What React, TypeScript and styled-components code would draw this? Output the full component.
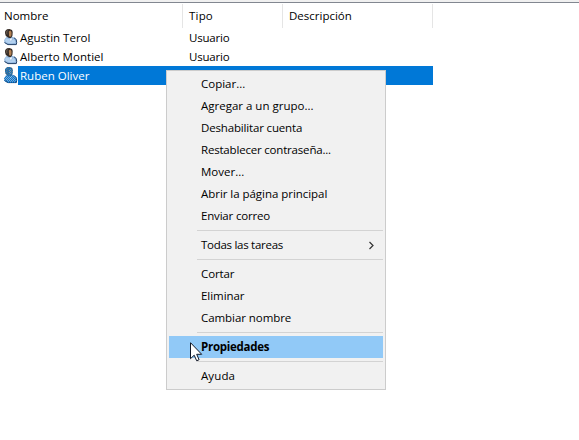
import React from 'react';
import styled, { createGlobalStyle } from 'styled-components';

const GlobalStyle = createGlobalStyle`
  body {
    margin: 0;
    background: #fff;
    overflow: hidden;
  }
`;

const Page = styled.main`
  position: relative;
  box-sizing: border-box;
  width: 579px;
  height: 440px;
  overflow: hidden;
  background: #fff;
  border-top: 2px solid #f0f0f0;
  color: #000;
  font: 11.5px/19px 'Open Sans', 'Noto Sans', sans-serif;
  white-space: nowrap;
  cursor: default;
`;

const Header = styled.div`
  display: grid;
  grid-template-columns: 183px 100px 150px;
  height: 26px;
  box-sizing: border-box;
  padding-top: 1px;
  border-top: 1px solid #828790;
`;

const HeaderCell = styled.div<{ $inset: number }>`
  box-sizing: border-box;
  height: 24px;
  padding-left: ${(p) => p.$inset}px;
  border-right: 1px solid #e5e5e5;
  line-height: 24px;
`;

const Label = styled.span<{ $tracking?: number }>`
  letter-spacing: ${(p) => p.$tracking ?? 0}px;
`;

const Row = styled.div`
  display: grid;
  grid-template-columns: 18px 165px 250px;
  width: 433px;
  height: 19px;
`;

const IconCell = styled.div`
  padding: 1px 0 0 3px;

  svg {
    display: block;
  }
`;

const Cell = styled.div<{ $inset: number; $selected?: boolean }>`
  padding-left: ${(p) => p.$inset}px;
  background: ${(p) => (p.$selected ? '#0078d7' : 'transparent')};
  color: ${(p) => (p.$selected ? '#fff' : '#000')};
`;

const Menu = styled.div`
  position: absolute;
  left: 166px;
  top: 68px;
  box-sizing: border-box;
  width: 220px;
  height: 320px;
  padding: 2px;
  background: #f1f1f1;
  border: 1px solid #ccc;
`;

const MenuItem = styled.div<{ $active?: boolean }>`
  display: flex;
  align-items: center;
  justify-content: space-between;
  box-sizing: border-box;
  height: 22px;
  padding: 0 8px 0 32px;
  line-height: 22px;
  font-weight: ${(p) => (p.$active ? 700 : 400)};
  background: ${(p) => (p.$active ? '#91c9f7' : 'transparent')};
`;

const Separator = styled.div`
  height: 1px;
  margin: 3px 0 3px 28px;
  background: #d3d3d3;
`;

const Pointer = styled.svg`
  position: absolute;
  left: 190px;
  top: 340px;
`;

const BODY = 'M1.200 11 3 8.500 5 7.500h4l3 1.500 1.500 1.500.5 3.500-1 2H5L1.500 14z';
const HEAD = 'M2.200 2 4 .2 6.500 0 9 1l.7 2-.2 3.500L8 9H6L2.800 7 2 4z';

function UserIcon({ selected }: { selected?: boolean }) {
  return (
    <svg width="15" height="17" viewBox="0 0 15 17">
      {selected && (
        <defs>
          <pattern id="dither" width="2" height="2" patternUnits="userSpaceOnUse">
            <path d="M0 0h1v1H0zM1 1h1v1H1z" fill="#0078d7" shapeRendering="crispEdges" />
          </pattern>
        </defs>
      )}
      <path d={BODY} fill="#91b5dc" />
      <path d="m2 11 1.500-1.800L6 10l2 3 2-3 1.500.7 1 3-4.500.8-5-1z" fill="#b4d2f0" />
      <path d="m6.500 10 1.500 2.500L9.300 9z" fill="#f5f9fd" />
      <path
        d="M1.500 13.500 5 15.600h8.300l.4-2.100-.5-3-2.200-1.700"
        fill="none"
        stroke="#29466b"
        strokeWidth="1"
      />
      <path d={HEAD} fill="#352b25" />
      <path d="M5.800 2.500 7.300 1.500l1.200 1.500v3.300L7.300 8 6 7z" fill="#b48254" />
      <path d="m3 2.500 1.200-1.200h1L4.300 3l.2 2.800L3.200 5z" fill="#63564a" />
      {selected && (
        <>
          <path d={BODY} fill="#25517c" fillOpacity=".3" />
          <path d={HEAD} fill="#7fa3c2" fillOpacity=".45" />
          <path d={BODY + HEAD} fill="url(#dither)" />
        </>
      )}
    </svg>
  );
}

type Text = { text: string; tracking?: number };

const users: { name: Text; type?: string; selected?: boolean }[] = [
  { name: { text: 'Agustin Terol' }, type: 'Usuario' },
  { name: { text: 'Alberto Montiel', tracking: 0.03 }, type: 'Usuario' },
  { name: { text: 'Ruben Oliver' }, selected: true },
];

type Entry = Text & { submenu?: boolean; active?: boolean };

const groups: Entry[][] = [
  [
    { text: 'Copiar...' },
    { text: 'Agregar a un grupo...' },
    { text: 'Deshabilitar cuenta', tracking: -0.16 },
    { text: 'Restablecer contraseña...', tracking: -0.19 },
    { text: 'Mover...' },
    { text: 'Abrir la página principal', tracking: -0.04 },
    { text: 'Enviar correo', tracking: -0.18 },
  ],
  [{ text: 'Todas las tareas', tracking: -0.28, submenu: true }],
  [
    { text: 'Cortar', tracking: -0.1 },
    { text: 'Eliminar', tracking: -0.05 },
    { text: 'Cambiar nombre', tracking: -0.06 },
  ],
  [{ text: 'Propiedades', tracking: -0.28, active: true }],
  [{ text: 'Ayuda', tracking: 0.1 }],
];

export default function App() {
  return (
    <Page>
      <GlobalStyle />
      <Header>
        <HeaderCell $inset={4}>
          <Label>Nombre</Label>
        </HeaderCell>
        <HeaderCell $inset={6}>
          <Label $tracking={0.2}>Tipo</Label>
        </HeaderCell>
        <HeaderCell $inset={6}>
          <Label>Descripción</Label>
        </HeaderCell>
      </Header>
      {users.map((user) => (
        <Row key={user.name.text}>
          <IconCell>
            <UserIcon selected={user.selected} />
          </IconCell>
          <Cell $inset={2} $selected={user.selected}>
            <Label $tracking={user.name.tracking}>{user.name.text}</Label>
          </Cell>
          <Cell $inset={6} $selected={user.selected}>
            {user.type && <Label $tracking={-0.2}>{user.type}</Label>}
          </Cell>
        </Row>
      ))}
      <Menu>
        {groups.map((entries, index) => (
          <React.Fragment key={index}>
            {index > 0 && <Separator />}
            {entries.map((entry) => (
              <MenuItem key={entry.text} $active={entry.active}>
                <Label $tracking={entry.tracking}>{entry.text}</Label>
                {entry.submenu && (
                  <svg width="7" height="9" viewBox="0 0 7 9">
                    <path d="m1.500 1 3.500 3.500L1.500 8" fill="none" stroke="#333" strokeWidth="1.200" />
                  </svg>
                )}
              </MenuItem>
            ))}
          </React.Fragment>
        ))}
      </Menu>
      <Pointer width="13" height="20" viewBox="0 0 13 20">
        <path
          d="M.5.700v16l3.700-3.500 2.500 5.600 2.400-1.100-2.400-5.400h5z"
          fill="#fff"
          stroke="#111827"
          strokeWidth="1"
        />
      </Pointer>
    </Page>
  );
}
